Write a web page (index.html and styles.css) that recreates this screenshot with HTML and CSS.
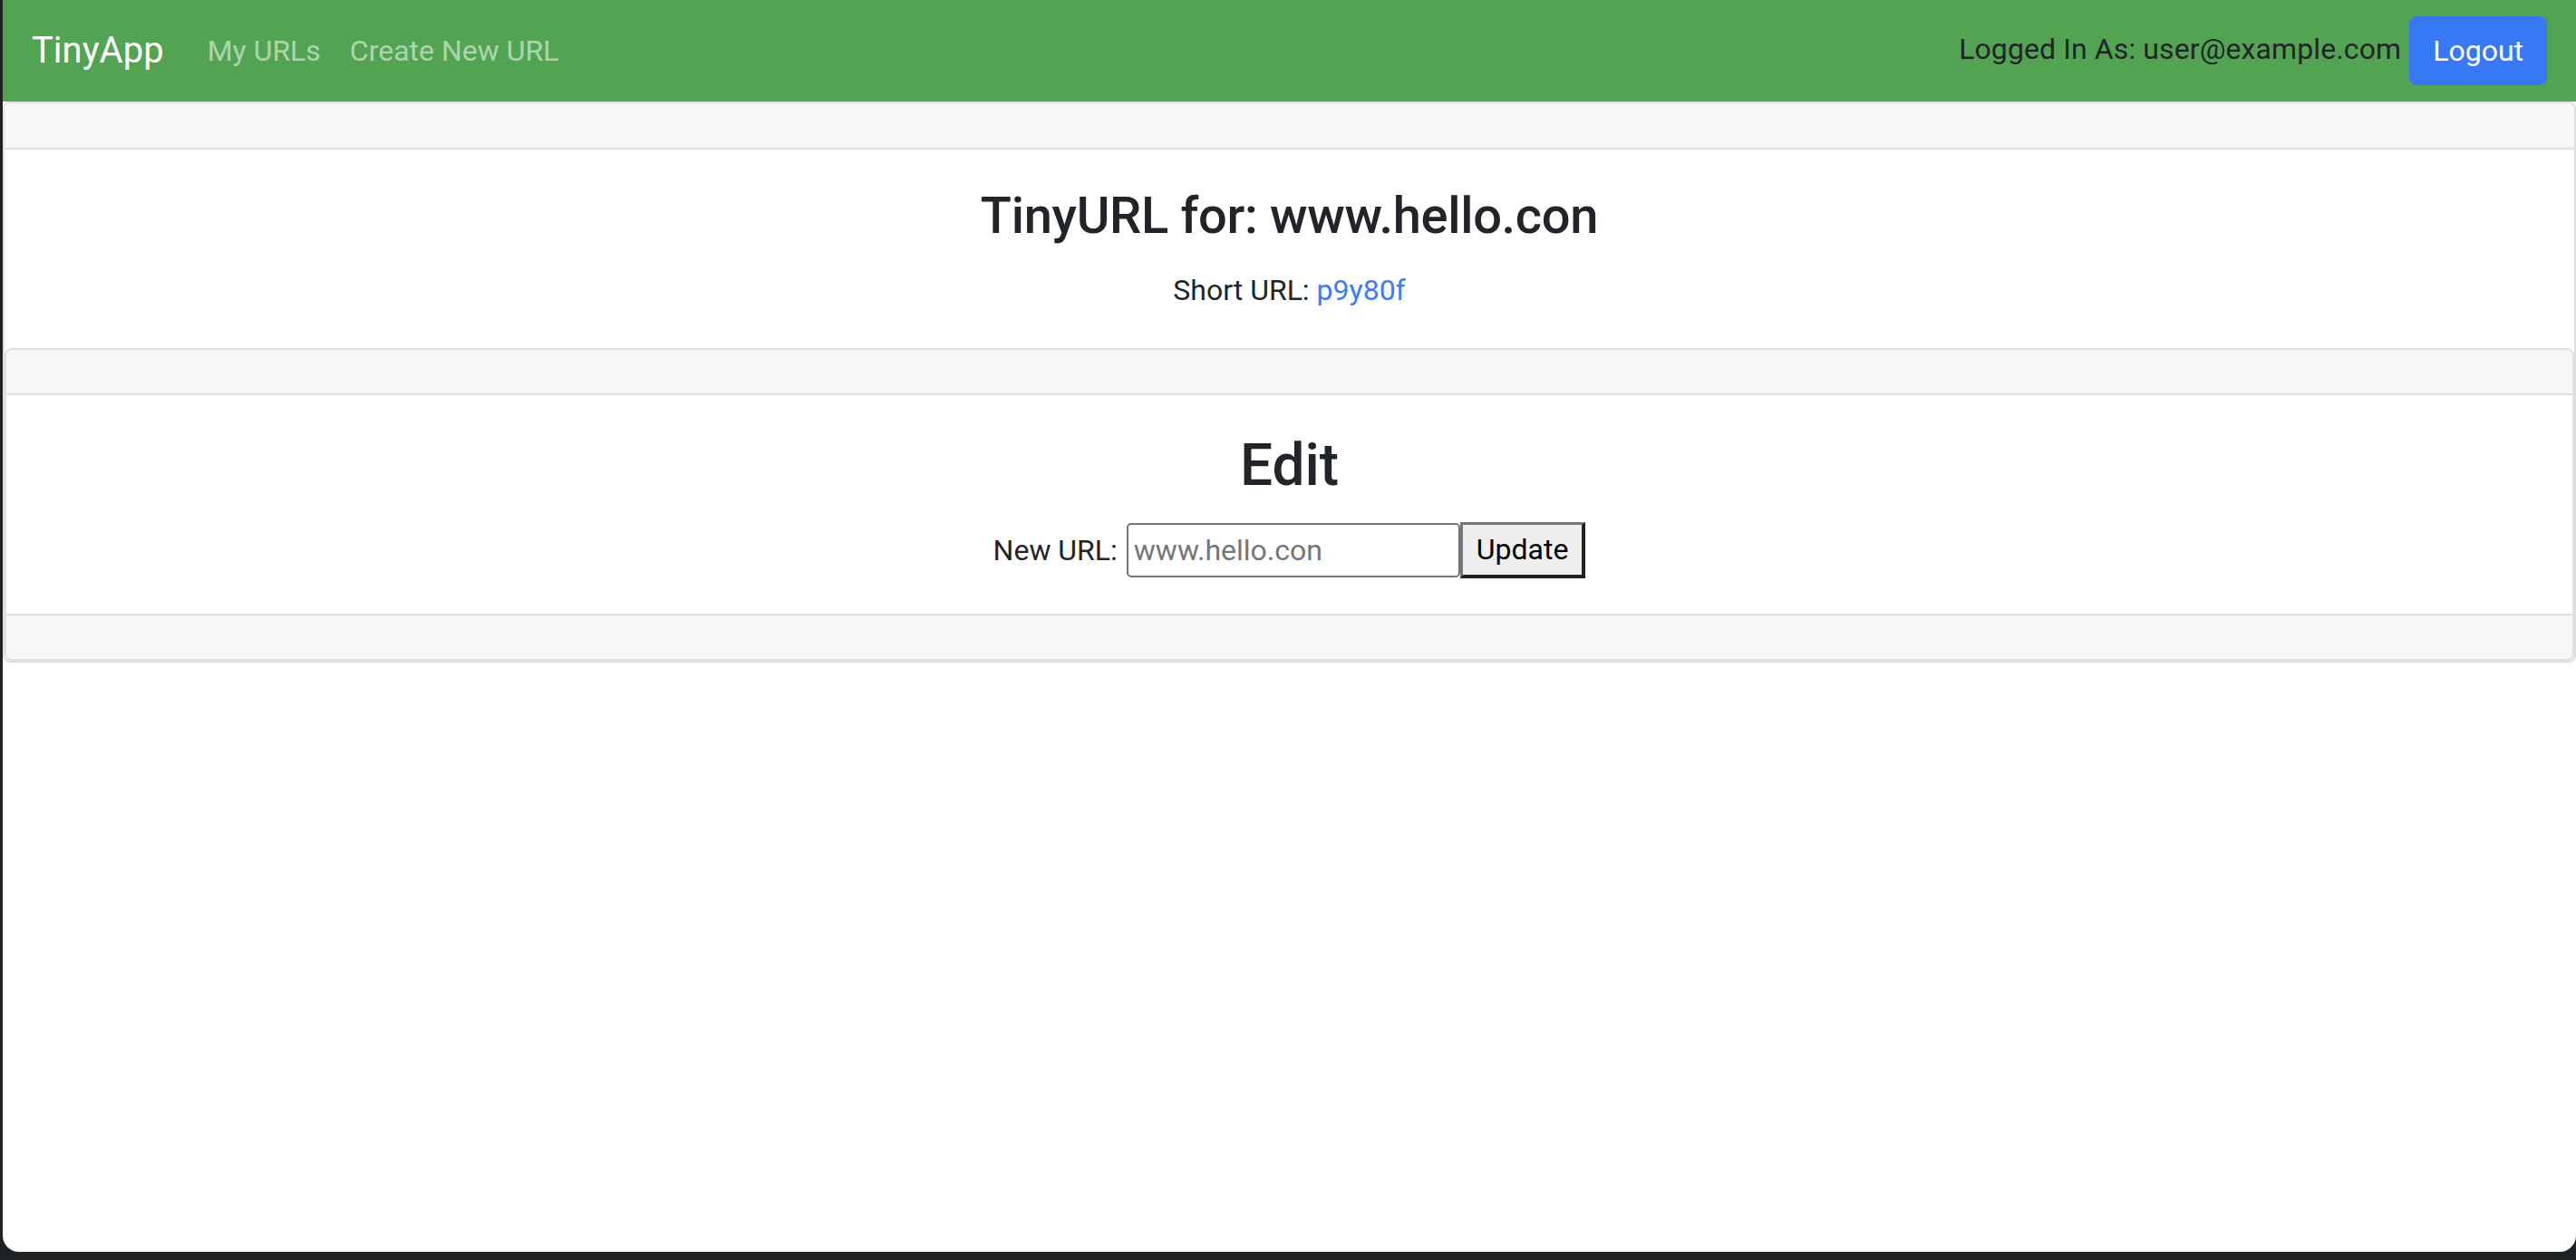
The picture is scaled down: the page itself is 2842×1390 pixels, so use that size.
FILE: index.html
```html
<!DOCTYPE html>
<html lang="en">
<head>
<meta charset="utf-8">
<title>TinyApp</title>
<link rel="stylesheet" href="styles.css">
</head>
<body>
<div class="window">
  <nav class="navbar">
    <a class="brand" href="#">TinyApp</a>
    <ul class="nav">
      <li><a class="nav-link" href="#">My URLs</a></li>
      <li><a class="nav-link" href="#">Create New URL</a></li>
    </ul>
    <div class="nav-right">
      <span class="user">Logged In As: user@example.com</span>
      <button class="btn-logout" type="button">Logout</button>
    </div>
  </nav>
  <div class="card card-outer">
    <div class="card-header"></div>
    <div class="card-body">
      <h3 class="title">TinyURL for: www.hello.con</h3>
      <p class="short">Short URL: <a class="link" href="#">p9y80f</a></p>
    </div>
    <div class="card card-inner">
      <div class="card-header"></div>
      <div class="card-body">
        <h2 class="edit-title">Edit</h2>
        <form class="edit-form">
          <label class="label" for="newurl">New URL:</label>
          <input class="url-input" id="newurl" type="text" placeholder="www.hello.con"><button class="btn-update" type="button">Update</button>
        </form>
      </div>
      <div class="card-footer"></div>
    </div>
  </div>
</div>
</body>
</html>
```
FILE: styles.css
```css
* { box-sizing: border-box; }
html, body {
  margin: 0;
  padding: 0;
  background: #1f2225;
  height: 1390px;
  overflow: hidden;
}
body {
  font-family: Roboto, "Noto Sans", sans-serif;
  font-size: 32px;
  line-height: 1.5;
  color: #212529;
}
.window {
  margin-left: 3px;
  height: 1381px;
  background: #ffffff;
  border-radius: 0 0 18px 18px;
  overflow: hidden;
}
.navbar {
  display: flex;
  align-items: center;
  height: 112px;
  padding: 16px 32px;
  background: #52a452;
}
.brand {
  font-size: 40px;
  line-height: 60px;
  padding: 10px 0;
  margin-right: 32px;
  color: #ffffff;
  text-decoration: none;
}
.nav {
  display: flex;
  list-style: none;
  margin: 0;
  padding: 0;
}
.nav-link {
  display: block;
  padding: 0 16px;
  color: rgba(255, 255, 255, 0.55);
  text-decoration: none;
}
.nav-right {
  margin-left: auto;
  display: flex;
  align-items: center;
}
.user {
  margin-right: 9px;
  margin-top: -4px;
  color: #212529;
  letter-spacing: 0.1px;
}
.btn-logout {
  font-family: inherit;
  font-size: 32px;
  line-height: 48px;
  padding: 12px 24px;
  border: 2px solid #3778f5;
  border-radius: 8px;
  background: #3778f5;
  color: #ffffff;
}
.card {
  border: 2px solid #dfdfdf;
  border-radius: 8px;
  background: #ffffff;
}
.card-header {
  height: 51px;
  padding: 24px 40px;
  background: #f7f7f7;
  border-bottom: 2px solid #dfdfdf;
  border-radius: 6px 6px 0 0;
}
.card-inner .card-header { height: 50px; }
.card-body {
  padding: 40px;
  text-align: center;
}
.card-footer {
  height: 50px;
  background: #f7f7f7;
  border-top: 2px solid #dfdfdf;
  border-radius: 0 0 6px 6px;
}
.title {
  margin: 0 0 24px;
  font-size: 56px;
  line-height: 1.2;
  font-weight: 500;
  letter-spacing: -0.3px;
}
.short { margin: 0; }
.link {
  color: #3a7cf6;
  text-decoration: none;
}
.edit-title {
  margin: 0 0 24px;
  font-size: 64px;
  line-height: 1.2;
  font-weight: 500;
}
.edit-form {
  display: flex;
  justify-content: center;
  align-items: center;
  height: 60px;
}
.label { margin-right: 10px; }
.url-input {
  width: 368px;
  height: 60px;
  font-family: inherit;
  font-size: 32px;
  padding: 0 6px;
  border: 2px solid #767676;
  border-radius: 5px;
  color: #212529;
}
.url-input::placeholder { color: #757575; }
.btn-update {
  height: 62px;
  padding: 0 15px;
  font-family: inherit;
  font-size: 32px;
  color: #000000;
  background: #efefef;
  border-style: solid;
  border-width: 3px 4px 4px 3px;
  border-color: #777777 #222222 #222222 #777777;
  border-radius: 0;
}
```
